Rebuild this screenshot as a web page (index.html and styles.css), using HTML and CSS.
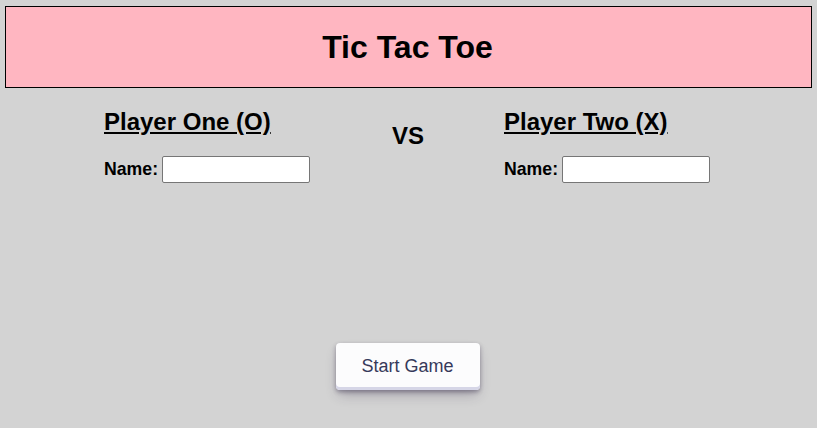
FILE: index.html
```html
<!DOCTYPE html>
<html>
<head>
<meta charset="utf-8">
<link rel="stylesheet" href="styles.css">
</head>
<body>
<header class="banner"><h1 class="title">Tic Tac Toe</h1></header>
<main class="players">
  <section class="player">
    <h2 class="player-title">Player One (O)</h2>
    <label class="name-row"><span class="name-label">Name:</span><input class="name-input" type="text"></label>
  </section>
  <div class="vs">VS</div>
  <section class="player">
    <h2 class="player-title">Player Two (X)</h2>
    <label class="name-row"><span class="name-label">Name:</span><input class="name-input" type="text"></label>
  </section>
</main>
<div class="actions"><button class="start-btn" type="button">Start Game</button></div>
</body>
</html>
```
FILE: styles.css
```css
html, body { margin: 0; padding: 0; }
html { background: #d3d3d3; }
body {
  background: #d3d3d3;
  font-family: "Liberation Sans", Arial, sans-serif;
  color: #000;
  padding: 6px 5px 30px 5px;
}
.banner {
  background: #ffb6c1;
  border: 1px solid #000;
  height: 80px;
  display: flex;
  align-items: center;
  justify-content: center;
}
.title {
  margin: 0 2px 0 0;
  font-size: 32px;
  font-weight: bold;
}
.players {
  display: flex;
  justify-content: center;
  gap: 81px;
  margin-top: 19px;
  padding-right: 2px;
}
.player { width: 207px; }
.player-title {
  margin: 0;
  font-size: 24px;
  font-weight: bold;
  text-decoration: underline;
  line-height: 30px;
}
.vs {
  font-size: 24px;
  font-weight: bold;
  width: 31px;
  margin-top: 15px;
  text-align: center;
}
.name-row {
  display: flex;
  align-items: center;
  gap: 4px;
  margin-top: 19px;
  font-size: 17.7px;
  font-weight: bold;
}
.name-input {
  box-sizing: border-box;
  width: 148px;
  height: 27px;
  margin: 0;
  border: 1px solid #767676;
  border-radius: 2px;
  background: #fff;
  font-size: 14px;
}
.actions {
  display: flex;
  justify-content: center;
  margin-top: 160px;
  padding-right: 2px;
}
.start-btn {
  box-sizing: border-box;
  width: 144px;
  height: 47px;
  border: 0;
  border-radius: 4px;
  background: #fcfcfd;
  color: #36395a;
  font-family: "Liberation Sans", Arial, sans-serif;
  font-size: 18px;
  box-shadow: rgba(45,35,66,0.4) 0 2px 4px, rgba(45,35,66,0.3) 0 7px 13px -3px, #d6d6e7 0 -3px 0 inset;
  padding: 0 16px;
}
```
